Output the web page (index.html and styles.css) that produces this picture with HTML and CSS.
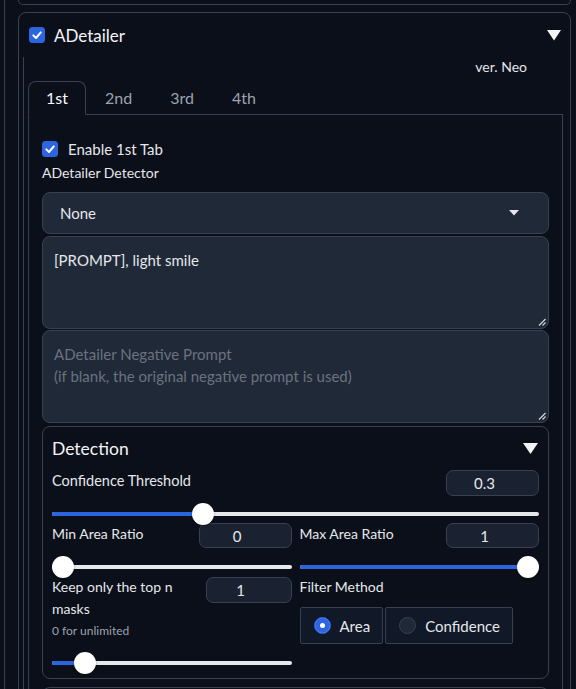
FILE: index.html
```html
<!DOCTYPE html>
<html lang="en">
<head>
<meta charset="utf-8">
<title>ADetailer</title>
<link rel="stylesheet" href="styles.css">
</head>
<body>
<div class="page">
  <div class="prev"></div>
  <section class="card">
    <header class="card-head">
      <span class="cb"><svg viewBox="0 0 16 16" width="16" height="16"><rect width="16" height="16" rx="3.5" fill="#2d64e0"/><path d="M4.3 8.4 L7 11 L11.8 5.4" fill="none" stroke="#fff" stroke-width="2" stroke-linecap="round" stroke-linejoin="round"/></svg></span>
      <span class="card-title">ADetailer</span>
      <svg class="tri" viewBox="0 0 14 11" width="14" height="11"><polygon points="0,0 14,0 7,10.5" fill="#f3f4f6"/></svg>
    </header>
    <div class="card-body">
      <div class="tabs-wrap">
        <div class="ver">ver. Neo</div>
        <div class="tab-bar">
          <span class="tab active">1st</span>
          <span class="tab">2nd</span>
          <span class="tab">3rd</span>
          <span class="tab">4th</span>
          <span class="tab-fill"></span>
        </div>
        <div class="tab-panel">
          <label class="check-row">
            <span class="cb"><svg viewBox="0 0 16 16" width="16" height="16"><rect width="16" height="16" rx="3.5" fill="#2d64e0"/><path d="M4.3 8.4 L7 11 L11.8 5.4" fill="none" stroke="#fff" stroke-width="2" stroke-linecap="round" stroke-linejoin="round"/></svg></span>
            <span>Enable 1st Tab</span>
          </label>
          <div class="field-label">ADetailer Detector</div>
          <div class="dropdown">
            <span>None</span>
            <svg class="caret" viewBox="0 0 10 6" width="10" height="6"><polygon points="0,0 10,0 5,5.5" fill="#e5e7eb"/></svg>
          </div>
          <div class="textarea">
            <span>[PROMPT], light smile</span>
            <svg class="grip" viewBox="0 0 8 8" width="8" height="8"><path d="M7.5 1 L1 7.5 M7.5 4.5 L4.5 7.5" stroke="#d1d5db" stroke-width="1.2"/></svg>
          </div>
          <div class="textarea placeholder">
            <span>ADetailer Negative Prompt<br>(if blank, the original negative prompt is used)</span>
            <svg class="grip" viewBox="0 0 8 8" width="8" height="8"><path d="M7.5 1 L1 7.5 M7.5 4.5 L4.5 7.5" stroke="#d1d5db" stroke-width="1.2"/></svg>
          </div>
          <div class="accordion">
            <div class="acc-head">
              <span>Detection</span>
              <svg class="acc-tri" viewBox="0 0 15 11" width="15" height="11"><polygon points="0,0 15,0 7.5,11" fill="#f3f4f6"/></svg>
            </div>
            <div class="conf-row">
              <span class="lbl">Confidence Threshold</span>
              <span class="num w93">0.3</span>
            </div>
            <div class="slider mt8" style="--p:0.3"><span class="track"></span><span class="fill"></span><span class="thumb"></span></div>
            <div class="grid2">
              <div class="col">
                <div class="lab-row">
                  <span class="lbl">Min Area Ratio</span>
                  <span class="num w93 h25">0</span>
                </div>
                <div class="slider mt9" style="--p:0"><span class="track"></span><span class="fill"></span><span class="thumb"></span></div>
              </div>
              <div class="col">
                <div class="lab-row">
                  <span class="lbl">Max Area Ratio</span>
                  <span class="num w93 h25">1</span>
                </div>
                <div class="slider mt9" style="--p:1"><span class="track"></span><span class="fill"></span><span class="thumb"></span></div>
              </div>
            </div>
            <div class="grid2 last">
              <div class="col">
                <div class="lab-row top">
                  <span class="lbl lbl2">Keep only the top n masks</span>
                  <span class="num w86">1</span>
                </div>
                <div class="info">0 for unlimited</div>
                <div class="slider mt14" style="--p:0.1"><span class="track"></span><span class="fill"></span><span class="thumb"></span></div>
              </div>
              <div class="col">
                <div class="lbl lbl2">Filter Method</div>
                <div class="radios">
                  <label class="radio"><span class="dot on"></span>Area</label>
                  <label class="radio"><span class="dot"></span>Confidence</label>
                </div>
              </div>
            </div>
          </div>
          <div class="next"></div>
        </div>
      </div>
    </div>
  </section>
</div>
</body>
</html>
```
FILE: styles.css
```css
* { box-sizing: border-box; }
html, body { margin: 0; background: #0b0f19; }
body {
  font-family: Lato, "Liberation Sans", sans-serif;
  color: #e5e7eb;
  font-size: 14px;
  height: 689px;
  overflow: hidden;
}
.page {
  margin-left: 4px;
  border-left: 1px solid #374151;
  padding: 0 5px 0 13px;
  height: 689px;
}
.prev {
  height: 5px;
  border: 1px solid #374151;
  border-top: none;
  border-radius: 0 0 8px 8px;
}
.card {
  margin-top: 7px;
  border: 1px solid #374151;
  border-radius: 8px;
  height: 720px;
}
.card-head {
  display: flex;
  align-items: center;
  height: 44px;
  padding: 0 9px 0 10px;
}
.cb { display: flex; width: 16px; height: 16px; }
.card-title {
  margin-left: 9px;
  font-size: 17px;
  color: #f3f4f6;
  flex: 1;
}
.card-body { padding: 0 7px 0 4px; }
.tabs-wrap {
  border-left: 1px solid #374151;
  padding-left: 4px;
}
.ver {
  height: 20px;
  line-height: 20px;
  text-align: right;
  padding-right: 36px;
  font-size: 14px;
  color: #e5e7eb;
  margin-bottom: 4px;
}
.tab-bar { display: flex; height: 34px; }
.tab {
  padding: 0 19px;
  height: 34px;
  line-height: 33px;
  border-bottom: 1px solid #374151;
  font-size: 16px;
  color: #9ca3af;
}
.tab.active {
  border: 1px solid #374151;
  border-bottom: 1px solid transparent;
  border-radius: 8px 8px 0 0;
  color: #f9fafb;
  padding: 0 17px;
  line-height: 31px;
}
.tab-fill { flex: 1; border-bottom: 1px solid #374151; }
.tab-panel {
  border: 1px solid #374151;
  border-top: none;
  padding: 24px 13px 0;
  height: 620px;
}
.check-row {
  display: flex;
  align-items: center;
  gap: 10px;
  height: 20px;
  font-size: 15px;
  color: #e5e7eb;
}
.field-label {
  margin-top: 4px;
  height: 20px;
  line-height: 20px;
  font-size: 14px;
}
.dropdown {
  margin-top: 9px;
  height: 42px;
  background: #1f2937;
  border: 1px solid #374151;
  border-radius: 8px;
  display: flex;
  align-items: center;
  justify-content: space-between;
  padding: 0 29px 0 17px;
  font-size: 15px;
}
.textarea {
  position: relative;
  margin-top: 2px;
  height: 93px;
  background: #1f2937;
  border: 1px solid #374151;
  border-radius: 8px;
  padding: 12px 11px;
  font-size: 15px;
  line-height: 22px;
  color: #e5e7eb;
}
.textarea.placeholder { margin-top: 1px; color: #6b7280; }
.grip { position: absolute; right: 2px; bottom: 2px; }
.accordion {
  margin-top: 3px;
  border: 1px solid #374151;
  border-radius: 8px;
  padding: 0 9px 6px;
}
.acc-head {
  height: 42px;
  display: flex;
  align-items: center;
  justify-content: space-between;
  font-size: 17.5px;
  color: #f3f4f6;
}
.acc-tri { margin-right: 1px; }
.conf-row {
  display: flex;
  justify-content: space-between;
  align-items: flex-start;
  height: 27px;
}
.lbl { font-size: 14px; line-height: 20px; color: #e5e7eb; }
.conf-row .lbl { padding-top: 2px; font-size: 14.5px; }
.num {
  display: flex;
  align-items: center;
  justify-content: center;
  padding-right: 16px;
  height: 26px;
  margin-top: 1px;
  background: #1a2231;
  border: 1px solid #374151;
  border-radius: 7px;
  font-size: 15px;
  flex: none;
}
.w93 { width: 93px; }
.w86 { width: 86px; }
.h25 { height: 25px; margin-top: 0; }
.slider { position: relative; height: 19px; }
.mt8 { margin-top: 8px; }
.mt9 { margin-top: 9px; }
.mt14 { margin-top: 14px; }
.track {
  position: absolute; left: 0; right: 0; top: 8px; height: 4px;
  border-radius: 2px; background: #e5e7eb;
}
.fill {
  position: absolute; left: 0; top: 8px; height: 4px; border-radius: 2px;
  background: #2d64e0;
  width: calc(var(--p) * (100% - 22px) + 11px);
}
.thumb {
  position: absolute; top: -1px;
  left: calc(var(--p) * (100% - 22px));
  width: 22px; height: 22px; border-radius: 50%;
  background: #fff;
  box-shadow: 0 1px 2px rgba(0,0,0,0.4);
}
.grid2 {
  display: grid;
  grid-template-columns: 1fr 1fr;
  column-gap: 8px;
}
.lab-row {
  display: flex;
  justify-content: space-between;
  align-items: flex-start;
}
.lab-row .lbl { padding-top: 1px; }
.lab-row.top .lbl { padding-top: 0; }
.lbl2 { line-height: 22px; }
.lab-row.top .lbl2 { flex: 1; padding-right: 8px; }
.info {
  margin-top: 3px;
  font-size: 12px;
  line-height: 16px;
  color: #9ca3af;
}
.radios {
  margin-top: 9px;
  display: flex;
  gap: 2px;
}
.radio {
  display: flex;
  align-items: center;
  gap: 9px;
  height: 37px;
  padding: 0 12px 0 13px;
  background: #111827;
  border: 1px solid #374151;
  border-radius: 2px;
  font-size: 15px;
}
.dot {
  width: 17px; height: 17px; border-radius: 50%;
  background: #1f2937;
  border: 1px solid #374151;
}
.dot.on {
  background: #2d64e0;
  border-color: #2d64e0;
  box-shadow: inset 0 0 0 5px #2d64e0, inset 0 0 0 9px #fff;
}
.next {
  margin-top: 8px;
  height: 40px;
  border: 1px solid #374151;
  border-bottom: none;
  border-radius: 8px 8px 0 0;
}
```
